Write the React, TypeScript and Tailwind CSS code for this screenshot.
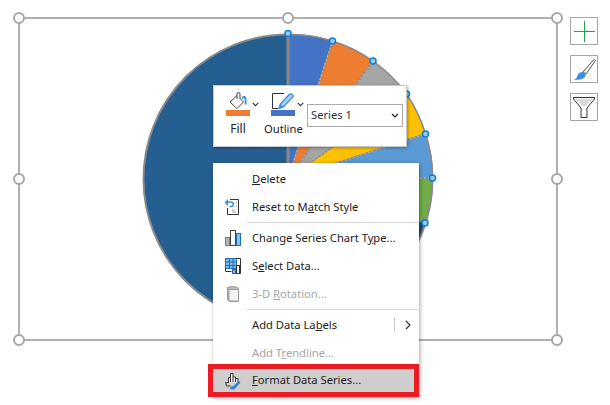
import React from 'react';

const CX = 288;
const CY = 179;
const R = 144.5;

// slice edges as they sit on the circle, clockwise from the top
const slices = [
  { from: [288, 34.5], to: [332.5, 41], fill: '#4472C4' },
  { from: [332.5, 41], to: [373, 61], fill: '#ED7D31' },
  { from: [373, 61], to: [406.5, 94], fill: '#A5A5A5' },
  { from: [406.5, 94], to: [425.5, 134], fill: '#FFC000' },
  { from: [425.5, 134], to: [432.5, 178], fill: '#5B9BD5' },
  { from: [432.5, 178], to: [425, 223], fill: '#70AD47' },
  { from: [425, 223], to: [420, 238], fill: '#264478' },
];

const piePoints = [
  [288, 33.5],
  [332.5, 41],
  [373, 61],
  [406.5, 94],
  [425.5, 134],
  [432.5, 178],
  [425, 223],
];

function PieChart() {
  return (
    <svg className="absolute left-[-20px] top-[-19px]" width="610" height="405" viewBox="0 0 610 405">
      <circle cx={CX} cy={CY} r={R} fill="#255E91" stroke="#8A8A8A" strokeWidth="2" />
      {slices.map((s, i) => (
        <path
          key={i}
          d={`M${CX} ${CY}L${s.from[0]} ${s.from[1]}A${R} ${R} 0 0 1 ${s.to[0]} ${s.to[1]}Z`}
          fill={s.fill}
          stroke="#8A8A8A"
          strokeWidth="1.5"
        />
      ))}
      {slices.map((s, i) => (
        <path
          key={i}
          d={`M${CX} ${CY}L${s.to[0]} ${s.to[1]}`}
          stroke="#FFFFFF"
          strokeOpacity="0.7"
          strokeWidth="0.6"
          strokeDasharray="2 2"
          fill="none"
        />
      ))}
      <path d={`M${CX} 33V${CY}`} stroke="#8A8A8A" strokeWidth="3" />
      {piePoints.map((p, i) => (
        <circle key={i} cx={p[0]} cy={p[1]} r="3" fill="#9CC9F0" stroke="#0F7FD6" strokeWidth="1.5" />
      ))}
    </svg>
  );
}

function Handle({ className }: { className: string }) {
  return <div className={`absolute h-[12px] w-[12px] rounded-full border-2 border-[#A6A6A6] bg-white ${className}`} />;
}

function FillIcon() {
  return (
    <svg width="20" height="18" viewBox="0 0 20 18">
      <path d="M8 3.500 1 10l7 6.500L14.500 10 11 6.500" fill="#fff" stroke="#444" strokeWidth="1" />
      <path d="M8 7V2a1.500 1.500 0 0 1 3 0v5" fill="none" stroke="#444" strokeWidth="1" />
      <path d="M12.500 7c.2-2.500 1.500-3.500 3-3 1.500.4 2 2 2 4v4.500h-1.800V8c0-1-.2-2-1-2-.6 0-.8.5-.9 1z" fill="#2F8FD8" />
    </svg>
  );
}

function OutlineIcon() {
  return (
    <svg width="24" height="16" viewBox="0 0 24 16">
      <path d="M12 .5H.5V15.500H6" fill="none" stroke="#333" strokeWidth="1" />
      <path d="M7 15.500l1.300-4.500L17.500 1.300a1.600 1.600 0 0 1 2.300 0l.8.8a1.600 1.600 0 0 1 0 2.300L11.200 14z" fill="#A9D2F2" stroke="#2F8FD8" strokeWidth="1.300" />
      <path d="M7 15.500l1.300-4.500 2.900 3z" fill="#2F8FD8" />
    </svg>
  );
}

function Caret() {
  return (
    <svg width="7" height="5" viewBox="0 0 7 5">
      <path d="M.7.8 3.500 3.600 6.300.8" fill="none" stroke="#333" strokeWidth="1.100" />
    </svg>
  );
}

function MiniToolbar() {
  return (
    <div className="absolute left-[193px] top-[66px] flex h-[62px] w-[194px] border border-[#C8C8C8] bg-white pl-[12px] shadow-[1px_1px_3px_rgba(0,0,0,0.3)]">
      <div className="flex w-[45px] flex-col">
        <div className="flex h-[24px] items-end">
          <div className="ml-[3px]"><FillIcon /></div>
          <div className="mb-[3px] ml-[3px]"><Caret /></div>
        </div>
        <div className="h-[6px] w-[24px] bg-[#ED7D31]" />
        <div className="mt-[5px] w-[24px] text-center text-[12px] leading-[16px] text-[#222]">Fill</div>
      </div>
      <div className="flex w-[36px] flex-col">
        <div className="flex h-[24px] items-end">
          <div className="mb-[1px] ml-[1px]"><OutlineIcon /></div>
          <div className="mb-[3px] ml-[1px]"><Caret /></div>
        </div>
        <div className="h-[6px] w-[24px] bg-[#4472C4]" />
        <div className="ml-[-7px] mt-[5px] text-[11.2px] leading-[16px] whitespace-nowrap text-[#222]">Outline</div>
      </div>
      <div className="mt-[18px] flex h-[23px] w-[96px] items-center justify-between border border-[#ABABAB] pl-[3px] pr-[3px] text-[11.2px] text-[#333]">
        <span>Series 1</span>
        <svg width="8" height="5" viewBox="0 0 8 5">
          <path d="M1 1l3 3 3-3" fill="none" stroke="#222" strokeWidth="1.200" />
        </svg>
      </div>
    </div>
  );
}

function ResetIcon() {
  return (
    <svg width="18" height="18" viewBox="0 0 18 18">
      <path d="M6 1.500h8.500v15H3.500V10" fill="#fff" stroke="#333" strokeWidth="1" />
      <path d="M.5 4.500 4 1v2.200h3a3 3 0 0 1 0 6H5.500V7.700H7a1.500 1.500 0 0 0 0-3H4V8z" fill="#3A8FD6" />
      <path d="M8 12h2.500M8 14h4M11.500 5h1.500M11.500 8h1.500" stroke="#999" strokeWidth="1" />
    </svg>
  );
}

function ChartTypeIcon() {
  return (
    <svg width="18" height="18" viewBox="0 0 18 18">
      <rect x="1.500" y="8.500" width="4" height="8" fill="#B5B5B5" stroke="#7A7A7A" />
      <rect x="6.500" y="1.500" width="5" height="15" fill="#fff" stroke="#444" />
      <rect x="12.500" y="4.500" width="4" height="12" fill="#8CC0EC" stroke="#1F6FB5" />
    </svg>
  );
}

function SelectDataIcon() {
  return (
    <svg width="18" height="18" viewBox="0 0 18 18">
      <rect x="1.500" y="1.500" width="11" height="10" fill="#7DB6E8" stroke="#1F6FB5" />
      <path d="M5.500 1.500v10M9 1.500v10M1.500 5h11M1.500 8.500h11" stroke="#1F6FB5" fill="none" />
      <path d="M12.500 1.500h4v15h-3M1.500 11.500v3h6" stroke="#333" fill="none" />
      <rect x="8.500" y="12.500" width="3" height="4" fill="#7DB6E8" stroke="#1F6FB5" />
      <rect x="12.500" y="8.500" width="3" height="8" fill="#fff" stroke="#333" />
    </svg>
  );
}

function RotationIcon() {
  return (
    <svg width="18" height="18" viewBox="0 0 18 18">
      <path d="M3.500 2.500c3-1.200 7-1.200 10 0l1 1V16.500H5l-1.500-2z" fill="#BDBDBD" stroke="#9A9A9A" />
      <path d="M5 4.500h9.500V16H5z" fill="#F4F4F4" stroke="#9A9A9A" />
    </svg>
  );
}

function FormatIcon() {
  return (
    <svg width="18" height="18" viewBox="0 0 18 18">
      <path d="M1.500 10.500h3V9M4.500 11V5.500h2V1.500h2.500V5h2.500v1.500H14V10" fill="#F2F2F2" stroke="#333" strokeWidth="1" />
      <path d="M6.500 5.500V10M9 5v5M11.500 6.500V10M1.500 10.500l1 3.500h4" fill="none" stroke="#333" strokeWidth="1" />
      <path d="M6 17c.3-2.300 1.500-3 3-2.500l6-5.500 1.500 1.500-5.500 6c-1 1-3 1.200-5 .5z" fill="#2F7FCB" />
    </svg>
  );
}

function MenuRow({
  icon,
  children,
  disabled,
  trailing,
}: {
  icon?: React.ReactNode;
  children: React.ReactNode;
  disabled?: boolean;
  trailing?: boolean;
}) {
  return (
    <div className={`flex h-[28px] items-center ${disabled ? 'text-[#A6A6A6]' : 'text-[#222]'}`}>
      <div className="flex w-[39px] justify-center">{icon}</div>
      <div className="text-[11.2px] whitespace-nowrap">{children}</div>
      {trailing && (
        <div className="ml-auto mr-[3px] flex h-[14px] w-[22px] items-center justify-end border-l border-[#C8C8C8] pr-[5px]">
          <svg width="6" height="10" viewBox="0 0 6 10">
            <path d="M1 1l4 4-4 4" fill="none" stroke="#333" strokeWidth="1.100" />
          </svg>
        </div>
      )}
    </div>
  );
}

function Separator() {
  return <div className="my-[1px] ml-[34px] mr-[1px] h-px bg-[#D4D4D4]" />;
}

function ContextMenu() {
  return (
    <div className="absolute left-[193px] top-[144px] w-[206px] bg-white pt-[2px] shadow-[1px_1px_4px_rgba(0,0,0,0.35)]">
      <MenuRow><u>D</u>elete</MenuRow>
      <MenuRow icon={<ResetIcon />}>Reset to M<u>a</u>tch Style</MenuRow>
      <Separator />
      <MenuRow icon={<ChartTypeIcon />}>Change Series Chart T<u>y</u>pe...</MenuRow>
      <MenuRow icon={<SelectDataIcon />}>S<u>e</u>lect Data...</MenuRow>
      <MenuRow icon={<RotationIcon />} disabled>3-D <u>R</u>otation...</MenuRow>
      <Separator />
      <MenuRow trailing>Add Data La<u>b</u>els</MenuRow>
      <MenuRow disabled>Add T<u>r</u>endline...</MenuRow>
      <div className="ml-[-5px] mt-[-3px] h-[33px] w-[211px] border-[5px] border-[#ED1C24] bg-[#CFCECC]">
        <div className="flex h-[23px] items-center text-[#222]">
          <div className="flex w-[39px] justify-center"><FormatIcon /></div>
          <div className="text-[11.2px] whitespace-nowrap"><u>F</u>ormat Data Series...</div>
        </div>
      </div>
    </div>
  );
}

function SideButton({ children }: { children: React.ReactNode }) {
  return <div className="flex h-[28px] w-[28px] items-center justify-center border border-[#A6A6A6] bg-white">{children}</div>;
}

export default function App() {
  return (
    <div className="flex h-[405px] w-[610px] items-start overflow-hidden bg-white pl-[18px] pt-[17px] font-['Noto_Sans','Open_Sans',sans-serif]">
      <div className="relative h-[324px] w-[540px] border-2 border-[#B0B0B0]">
        <PieChart />
        <Handle className="left-[-7px] top-[-7px]" />
        <Handle className="left-[262px] top-[-7px]" />
        <Handle className="right-[-7px] top-[-7px]" />
        <Handle className="left-[-7px] top-[154px]" />
        <Handle className="right-[-7px] top-[154px]" />
        <Handle className="bottom-[-7px] left-[-7px]" />
        <Handle className="bottom-[-7px] right-[-7px]" />
        <MiniToolbar />
        <ContextMenu />
      </div>
      <div className="ml-[12px] flex flex-col gap-[10px]">
        <SideButton>
          <svg width="21" height="21" viewBox="0 0 21 21">
            <path d="M10.500 0v21M0 10.500h21" stroke="#1FA34A" strokeWidth="1" />
          </svg>
        </SideButton>
        <SideButton>
          <svg width="25" height="25" viewBox="0 0 25 25">
            <path d="M11 15 21.500 3c1-1 2.300-.2 1.600 1L14 17z" fill="#fff" stroke="#555" strokeWidth="1" />
            <path d="M1.500 22.500c2.500-.5 3.500-2 4-4 .8-2.300 3.500-3.800 5.500-3.300 2 .6 3 2.300 2.500 3.800-.8 2.800-7 4.500-12 3.500z" fill="#3E8EDE" />
          </svg>
        </SideButton>
        <SideButton>
          <svg width="24" height="24" viewBox="0 0 24 24">
            <path d="M1.500 2.500h21v1.500L15 13v9.500H9V13L1.500 4z" fill="#fff" stroke="#333" strokeWidth="1" />
            <path d="M4 4h16l-6 7h-4z" fill="#DADADA" />
          </svg>
        </SideButton>
      </div>
    </div>
  );
}
